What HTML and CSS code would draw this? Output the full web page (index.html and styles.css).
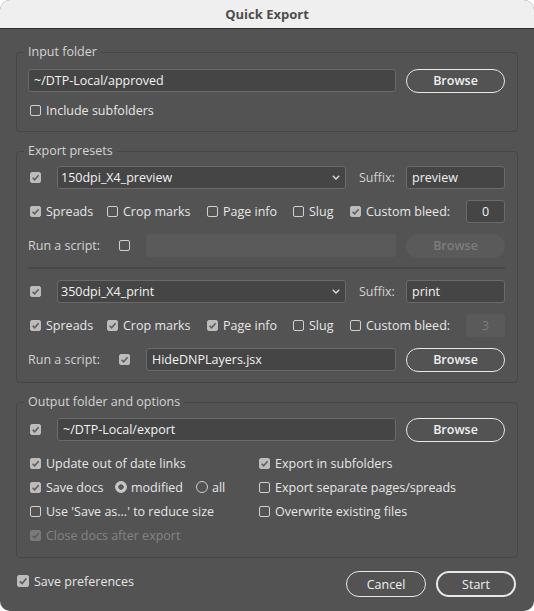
FILE: index.html
```html
<!DOCTYPE html>
<html>
<head>
<meta charset="utf-8">
<title>Quick Export</title>
<link rel="stylesheet" href="styles.css">
</head>
<body>
<div class="window">
  <div class="titlebar">Quick Export</div>
  <div class="content">

    <fieldset class="panel p-input">
      <legend>Input folder</legend>
      <div class="path-row">
        <div class="field">~/DTP-Local/approved</div>
        <button class="btn">Browse</button>
      </div>
      <div class="single-row">
        <label class="cb"><span class="box"></span>Include subfolders</label>
      </div>
    </fieldset>

    <fieldset class="panel p-presets">
      <legend>Export presets</legend>

      <div class="preset-row">
        <span class="cell-cb"><span class="box on"><svg viewBox="0 0 11 11"><path d="M2.6 5.8 L4.6 7.8 L8.6 3.2"/></svg></span></span>
        <div class="select"><span>150dpi_X4_preview</span><svg class="chev" viewBox="0 0 8 5"><path d="M0.8 0.8 L4 4 L7.2 0.8"/></svg></div>
        <span class="lbl suffix">Suffix:</span>
        <div class="field">preview</div>
      </div>

      <div class="opts-row">
        <label class="cb"><span class="box on"><svg viewBox="0 0 11 11"><path d="M2.6 5.8 L4.6 7.8 L8.6 3.2"/></svg></span>Spreads</label>
        <label class="cb"><span class="box"></span>Crop marks</label>
        <label class="cb"><span class="box"></span>Page info</label>
        <label class="cb"><span class="box"></span>Slug</label>
        <label class="cb"><span class="box on"><svg viewBox="0 0 11 11"><path d="M2.6 5.8 L4.6 7.8 L8.6 3.2"/></svg></span>Custom bleed:</label>
        <div class="field num">0</div>
      </div>

      <div class="script-row">
        <span class="lbl script-lbl">Run a script:</span>
        <span class="cell-cb"><span class="box"></span></span>
        <div class="field disabled"></div>
        <button class="btn disabled">Browse</button>
      </div>

      <div class="sep"></div>

      <div class="preset-row">
        <span class="cell-cb"><span class="box on"><svg viewBox="0 0 11 11"><path d="M2.6 5.8 L4.6 7.8 L8.6 3.2"/></svg></span></span>
        <div class="select"><span>350dpi_X4_print</span><svg class="chev" viewBox="0 0 8 5"><path d="M0.8 0.8 L4 4 L7.2 0.8"/></svg></div>
        <span class="lbl suffix">Suffix:</span>
        <div class="field">print</div>
      </div>

      <div class="opts-row">
        <label class="cb"><span class="box on"><svg viewBox="0 0 11 11"><path d="M2.6 5.8 L4.6 7.8 L8.6 3.2"/></svg></span>Spreads</label>
        <label class="cb"><span class="box on"><svg viewBox="0 0 11 11"><path d="M2.6 5.8 L4.6 7.8 L8.6 3.2"/></svg></span>Crop marks</label>
        <label class="cb"><span class="box on"><svg viewBox="0 0 11 11"><path d="M2.6 5.8 L4.6 7.8 L8.6 3.2"/></svg></span>Page info</label>
        <label class="cb"><span class="box"></span>Slug</label>
        <label class="cb"><span class="box"></span>Custom bleed:</label>
        <div class="field num disabled">3</div>
      </div>

      <div class="script-row">
        <span class="lbl script-lbl">Run a script:</span>
        <span class="cell-cb"><span class="box on"><svg viewBox="0 0 11 11"><path d="M2.6 5.8 L4.6 7.8 L8.6 3.2"/></svg></span></span>
        <div class="field">HideDNPLayers.jsx</div>
        <button class="btn">Browse</button>
      </div>
    </fieldset>

    <fieldset class="panel p-output">
      <legend>Output folder and options</legend>
      <div class="out-row">
        <span class="cell-cb"><span class="box on"><svg viewBox="0 0 11 11"><path d="M2.6 5.8 L4.6 7.8 L8.6 3.2"/></svg></span></span>
        <div class="field">~/DTP-Local/export</div>
        <button class="btn">Browse</button>
      </div>
      <div class="options-grid">
        <label class="cb"><span class="box on"><svg viewBox="0 0 11 11"><path d="M2.6 5.8 L4.6 7.8 L8.6 3.2"/></svg></span>Update out of date links</label>
        <label class="cb"><span class="box on"><svg viewBox="0 0 11 11"><path d="M2.6 5.8 L4.6 7.8 L8.6 3.2"/></svg></span>Export in subfolders</label>
        <div class="save-docs">
          <label class="cb save-cb"><span class="box on"><svg viewBox="0 0 11 11"><path d="M2.6 5.8 L4.6 7.8 L8.6 3.2"/></svg></span>Save docs</label>
          <label class="rb"><span class="radio on"></span>modified</label>
          <label class="rb"><span class="radio"></span>all</label>
        </div>
        <label class="cb"><span class="box"></span>Export separate pages/spreads</label>
        <label class="cb"><span class="box"></span>Use 'Save as...' to reduce size</label>
        <label class="cb"><span class="box"></span>Overwrite existing files</label>
        <label class="cb dim"><span class="box on"><svg viewBox="0 0 11 11"><path d="M2.6 5.8 L4.6 7.8 L8.6 3.2"/></svg></span>Close docs after export</label>
      </div>
    </fieldset>

    <div class="footer">
      <label class="cb prefs"><span class="box on"><svg viewBox="0 0 11 11"><path d="M2.6 5.8 L4.6 7.8 L8.6 3.2"/></svg></span>Save preferences</label>
      <div class="actions">
        <button class="btn big">Cancel</button>
        <button class="btn big default">Start</button>
      </div>
    </div>

  </div>
</div>
</body>
</html>
```

FILE: styles.css
```css
* { box-sizing: border-box; }

html, body {
  margin: 0;
  padding: 0;
  background: #ffffff;
}

body {
  font-family: "Open Sans", "DejaVu Sans", sans-serif;
  font-size: 12.5px;
  color: #e6e6e6;
}

.window {
  width: 534px;
  height: 611px;
  background: #535353;
  border-radius: 10px;
  overflow: hidden;
  display: flex;
  flex-direction: column;
}

.titlebar {
  height: 29px;
  line-height: 28px;
  background: #efefef;
  border-bottom: 1px solid #2e2e2e;
  text-align: center;
  font-weight: 700;
  font-size: 13px;
  color: #4d4d4d;
}

.content {
  padding-top: 15px;
  display: flex;
  flex-direction: column;
}

/* panels */
.panel {
  margin: 0 16px;
  min-width: 0;
  border: 1px solid #464646;
  border-radius: 4px;
  padding: 0 12px 0 11px;
}

.panel legend {
  line-height: 16px;
  padding: 0 4px;
  margin-left: -4px;
  color: #d4d4d4;
}

.p-input { padding-top: 9px; padding-bottom: 11px; }
.p-presets { margin-top: 11px; padding-top: 7px; padding-bottom: 11px; }
.p-output { margin-top: 11px; padding-top: 8px; padding-bottom: 10px; }

/* fields */
.field, .select {
  height: 23px;
  background: #454545;
  border: 1px solid #6a6a6a;
  border-radius: 3px;
  color: #f2f2f2;
  padding: 0 5px;
  display: flex;
  align-items: center;
  white-space: nowrap;
  overflow: hidden;
}

.select {
  padding: 0 5px 0 3px;
  justify-content: space-between;
}

.chev {
  width: 8px;
  height: 5px;
  fill: none;
  stroke: #e0e0e0;
  stroke-width: 1.3;
}

.field.num {
  justify-content: center;
  padding: 0;
}

.field.disabled {
  background: #5a5a5a;
  border-color: #5a5a5a;
  color: #7c7c7c;
}

/* buttons */
.btn {
  font-family: inherit;
  font-size: 12.5px;
  font-weight: 600;
  color: #f0f0f0;
  background: transparent;
  border: 1px solid #e8e8e8;
  border-radius: 12px;
  height: 24px;
  width: 99px;
  padding: 0;
  margin-left: 10px;
  flex: none;
}

.btn.disabled {
  background: #5a5a5a;
  border-color: #5a5a5a;
  color: #7d7d7d;
}

.btn.big {
  width: 80px;
  height: 26px;
  border-radius: 13px;
  margin-left: 0;
  font-weight: 500;
}

.btn.default {
  border-width: 2px;
}

/* checkboxes */
.cb, .rb {
  display: flex;
  align-items: center;
  white-space: nowrap;
}

.box {
  width: 11px;
  height: 11px;
  border: 1px solid #cfcfcf;
  border-radius: 2px;
  margin: 0 5px 0 2px;
  flex: none;
  display: flex;
}

.box.on {
  background: #bcbcbc;
  border-color: #bcbcbc;
}

.box svg {
  width: 11px;
  height: 11px;
  margin: -1px;
  fill: none;
  stroke: #5f5f5f;
  stroke-width: 1.6;
}

.cb.dim { color: #848484; }
.cb.dim .box.on { background: #7a7a7a; border-color: #7a7a7a; }
.cb.dim .box svg { stroke: #5a5a5a; }

.cell-cb {
  width: 29px;
  flex: none;
  display: flex;
  align-items: center;
}

.lbl { color: #d2d2d2; white-space: nowrap; }

/* rows */
.path-row {
  display: flex;
  align-items: center;
  height: 23px;
}
.path-row .field { flex: 1; }

.single-row {
  height: 20px;
  margin-top: 8px;
  display: flex;
  align-items: center;
}

.preset-row {
  display: grid;
  grid-template-columns: 29px 289px 1fr 99px;
  align-items: center;
  height: 23px;
}
.preset-row .cell-cb, .out-row .cell-cb { height: 23px; }

.suffix { margin-left: 13px; }

.opts-row {
  display: grid;
  grid-template-columns: 77px 100px 86px 57px 1fr 39px;
  align-items: center;
  height: 23px;
  margin-top: 11px;
}

.script-row {
  display: flex;
  align-items: center;
  height: 23px;
  margin-top: 11px;
}
.script-lbl { width: 89px; flex: none; }
.script-row .field { flex: 1; }

.sep {
  height: 2px;
  background: #474747;
  margin: 10px 0 11px;
}

.out-row {
  display: flex;
  align-items: center;
  height: 23px;
}
.out-row .field { flex: 1; }

.options-grid {
  margin-top: 10px;
  display: grid;
  grid-template-columns: 229px 1fr;
  grid-auto-rows: 24px;
  align-items: center;
}

.save-docs {
  display: flex;
  align-items: center;
}
.save-cb { width: 85px; }

.radio {
  width: 12px;
  height: 12px;
  border-radius: 50%;
  border: 1px solid #cfcfcf;
  margin: 0 4px 0 2px;
  flex: none;
}
.radio.on {
  border-color: #c6c6c6;
  background: radial-gradient(circle, #575757 0 2.4px, #c6c6c6 3px);
}
.rb + .rb { margin-left: 11px; }

/* footer */
.footer {
  margin-top: 13px;
  padding: 0 18px 0 15px;
  display: flex;
  justify-content: space-between;
  align-items: flex-start;
}

.prefs {
  margin-top: 2px;
  height: 16px;
}
.prefs .box { width: 12px; height: 12px; margin-right: 5px; }
.prefs .box svg { width: 12px; height: 12px; }

.actions {
  display: flex;
  gap: 10px;
}
```
